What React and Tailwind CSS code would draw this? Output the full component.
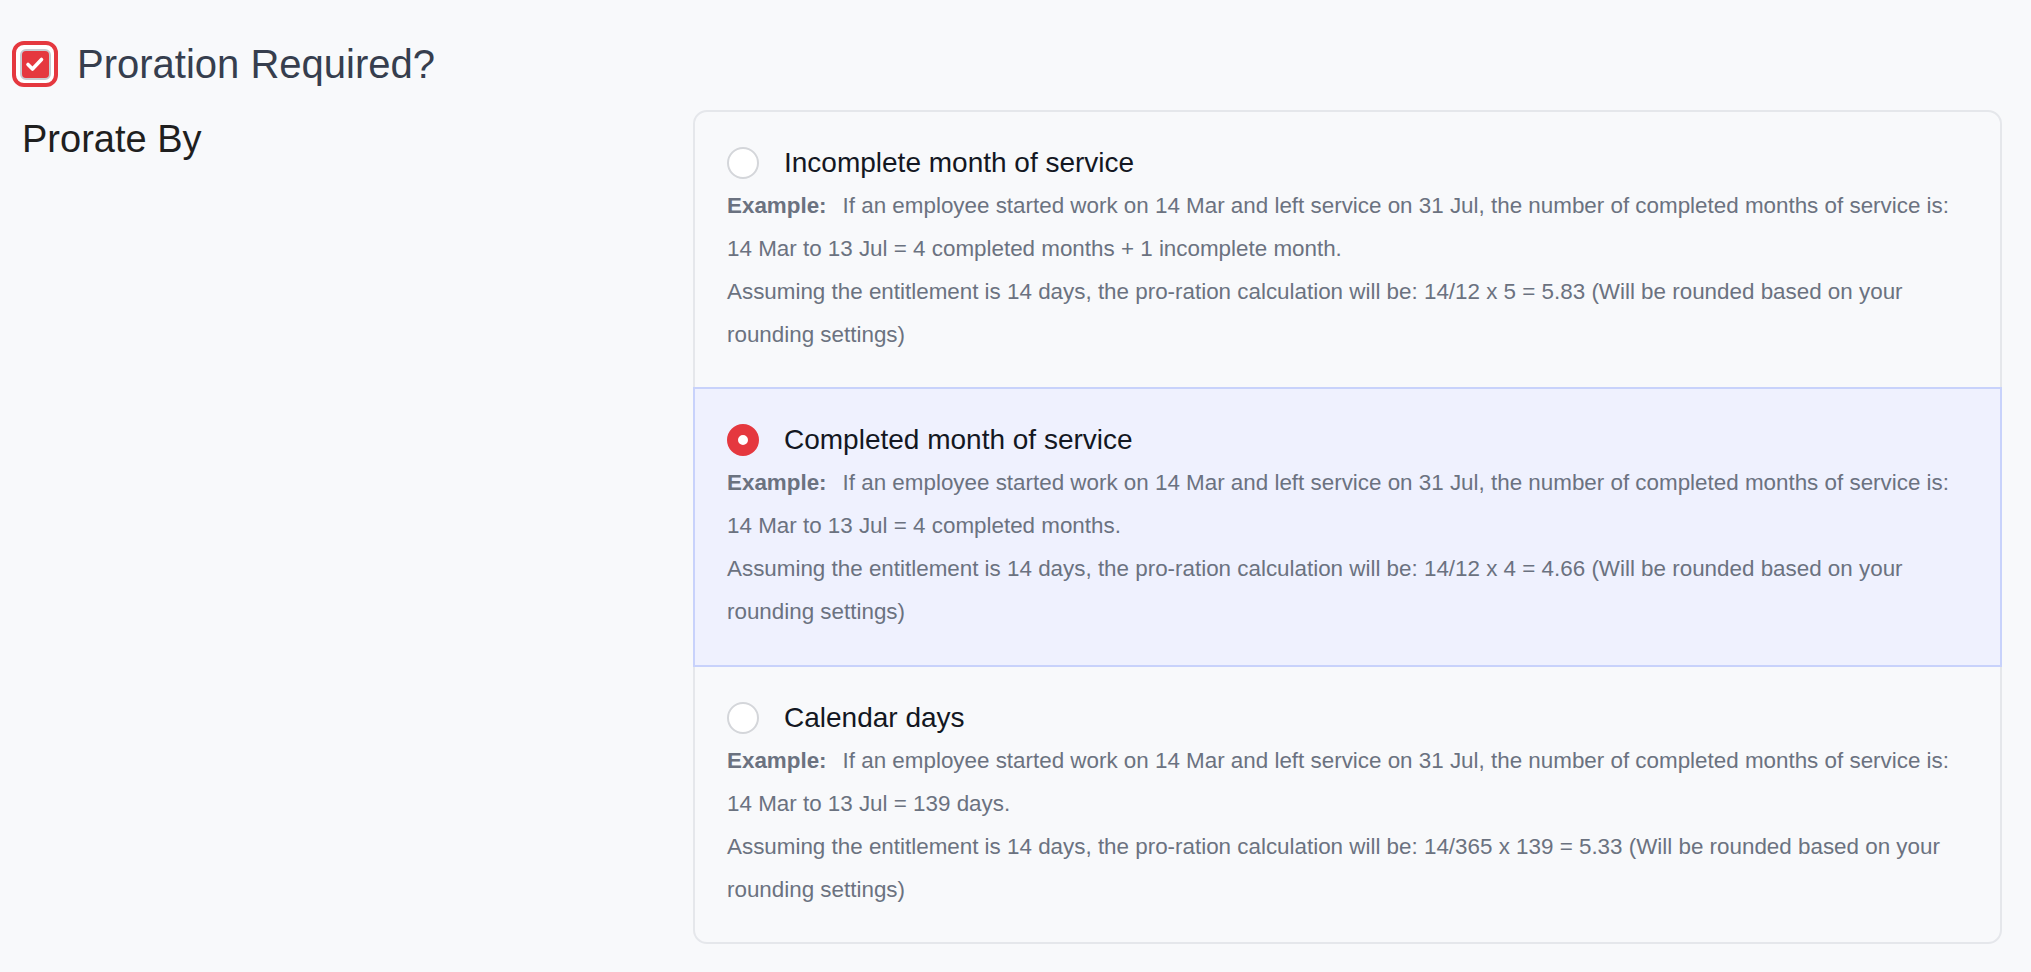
import React, { useState } from "react";

const options = [
  {
    id: "incomplete",
    label: "Incomplete month of service",
    lines: [
      "14 Mar to 13 Jul = 4 completed months + 1 incomplete month.",
      "Assuming the entitlement is 14 days, the pro-ration calculation will be: 14/12 x 5 = 5.83 (Will be rounded based on your rounding settings)",
    ],
  },
  {
    id: "completed",
    label: "Completed month of service",
    lines: [
      "14 Mar to 13 Jul = 4 completed months.",
      "Assuming the entitlement is 14 days, the pro-ration calculation will be: 14/12 x 4 = 4.66 (Will be rounded based on your rounding settings)",
    ],
  },
  {
    id: "calendar",
    label: "Calendar days",
    lines: [
      "14 Mar to 13 Jul = 139 days.",
      "Assuming the entitlement is 14 days, the pro-ration calculation will be: 14/365 x 139 = 5.33 (Will be rounded based on your rounding settings)",
    ],
  },
];

const Radio = ({ checked }) =>
  checked ? (
    <span className="w-[32px] h-[32px] rounded-full border-[11px] border-[#e5383f] bg-white shrink-0" />
  ) : (
    <span className="w-[32px] h-[32px] rounded-full border-2 border-[#d4d6da] bg-white shrink-0" />
  );

const App = () => {
  const [prorate, setProrate] = useState(true);
  const [selected, setSelected] = useState("completed");

  return (
    <div
      className="min-h-screen bg-[#f8f9fb] pt-[41px]"
      style={{ fontFamily: '"Liberation Sans", Arial, Helvetica, sans-serif' }}
    >
      <div className="flex items-center pl-[12px]">
        <button
          onClick={() => setProrate(!prorate)}
          className="w-[46px] h-[46px] rounded-[12px] border-[4px] border-[#e5383f] bg-white flex items-center justify-center"
        >
          <span className="w-[31px] h-[31px] rounded-[6px] border-2 border-[#c9ccd1] bg-[#e5383f] flex items-center justify-center">
            {prorate && (
              <svg width="22" height="22" viewBox="0 0 22 22" fill="none">
                <polyline
                  points="4,11.5 8.5,16 17.5,6.5"
                  stroke="white"
                  strokeWidth="3.6"
                  strokeLinecap="round"
                  strokeLinejoin="round"
                />
              </svg>
            )}
          </span>
        </button>
        <span className="ml-[19px] text-[40px] leading-[46px] text-[#363e4e]">Proration Required?</span>
      </div>

      <div className="flex mt-[23px] pl-[22px] pr-[29px]">
        <div className="w-[671px] shrink-0 pt-[6px] text-[38px] leading-[46px] text-[#1f1f1f]">Prorate By</div>

        <div className="flex-1 border-2 border-[#e5e7eb] rounded-[14px] flex flex-col">
          {options.map((opt) => {
            const isOn = selected === opt.id;
            return (
              <div
                key={opt.id}
                onClick={() => setSelected(opt.id)}
                className={
                  isOn
                    ? "-mx-[2px] border-2 border-[#c8d2fb] bg-[#eff1fe] px-[32px] pt-[35px] pb-[32px] cursor-pointer"
                    : "px-[32px] pt-[35px] pb-[31px] cursor-pointer"
                }
              >
                <div className="flex items-center h-[32px]">
                  <Radio checked={isOn} />
                  <span className="ml-[25px] text-[28px] text-[#131722]">{opt.label}</span>
                </div>
                <div className="mt-[5px] text-[22.4px] leading-[43px] text-[#6b7280]">
                  <p>
                    <span className="font-bold mr-[16px]">Example:</span>
                    If an employee started work on 14 Mar and left service on 31 Jul, the number of completed months of service is:
                  </p>
                  {opt.lines.map((l) => (
                    <p key={l}>{l}</p>
                  ))}
                </div>
              </div>
            );
          })}
        </div>
      </div>
    </div>
  );
};

export default App;
